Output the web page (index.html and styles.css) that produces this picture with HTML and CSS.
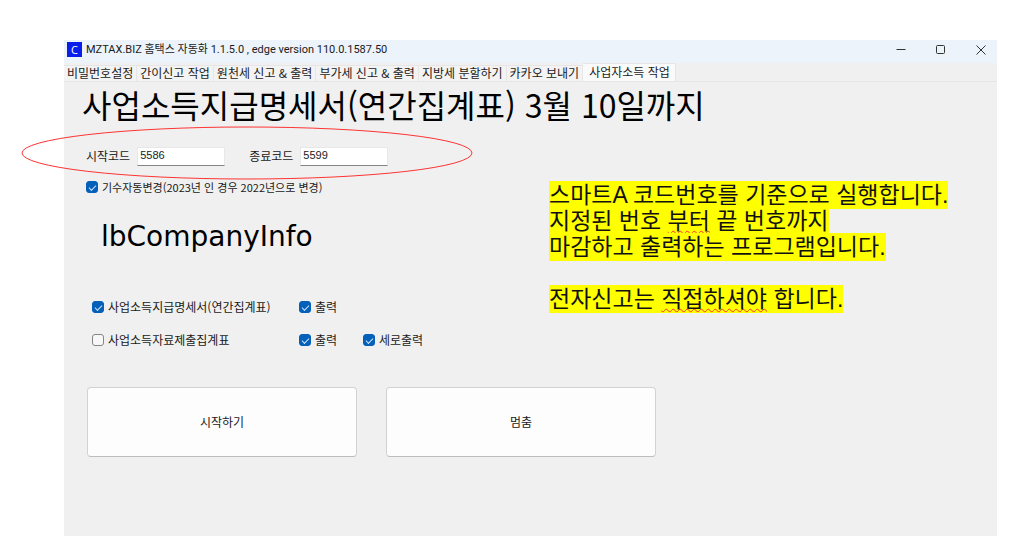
FILE: index.html
```html
<!DOCTYPE html>
<html lang="ko">
<head>
    <meta charset="UTF-8">
    <meta name="viewport" content="width=device-width, initial-scale=1.0">
    <title>MZTAX.BIZ 홈택스 자동화</title>
    <link rel="stylesheet" href="styles.css">
</head>
<body>
    <div class="window">
        <header class="titlebar">
            <span class="app-icon">C</span>
            <span class="app-title">MZTAX.BIZ 홈택스 자동화 1.1.5.0 , edge version 110.0.1587.50</span>
            <div class="window-controls">
                <button type="button" aria-label="최소화">
                    <svg viewBox="0 0 12 12"><path d="M1.5 5.5h9"/></svg>
                </button>
                <button type="button" aria-label="최대화">
                    <svg viewBox="0 0 12 12"><rect x="1.5" y="1.5" width="8" height="8" rx="1"/></svg>
                </button>
                <button type="button" aria-label="닫기">
                    <svg viewBox="0 0 12 12"><path d="M1.5 1.5l9 9M10.5 1.5l-9 9"/></svg>
                </button>
            </div>
        </header>

        <nav class="tabs">
            <button type="button">비밀번호설정</button>
            <button type="button">간이신고 작업</button>
            <button type="button">원천세 신고 &amp; 출력</button>
            <button type="button">부가세 신고 &amp; 출력</button>
            <button type="button">지방세 분할하기</button>
            <button type="button">카카오 보내기</button>
            <button type="button" class="active">사업자소득 작업</button>
        </nav>

        <main class="page">
            <h1>사업소득지급명세서(연간집계표) 3월 10일까지</h1>

            <div class="columns">
                <div class="form">
                    <div class="codes">
                        <label for="start-code">시작코드</label>
                        <input type="text" id="start-code" value="5586">
                        <label for="end-code" class="end-label">종료코드</label>
                        <input type="text" id="end-code" value="5599">
                        <svg class="circle-mark" viewBox="0 0 452 54"><ellipse cx="226" cy="27" rx="225" ry="26"/></svg>
                    </div>
                    <label class="check small"><input type="checkbox" checked>기수자동변경(2023년 인 경우 2022년으로 변경)</label>

                    <h2>lbCompanyInfo</h2>

                    <div class="options">
                        <label class="check"><input type="checkbox" checked>사업소득지급명세서(연간집계표)</label>
                        <label class="check"><input type="checkbox" checked>출력</label>
                        <span></span>
                        <label class="check"><input type="checkbox">사업소득자료제출집계표</label>
                        <label class="check"><input type="checkbox" checked>출력</label>
                        <label class="check"><input type="checkbox" checked>세로출력</label>
                    </div>
                </div>

                <p class="note">
                    <mark>스마트A 코드번호를 기준으로 실행합니다.</mark><br>
                    <mark>지정된 번호 <span class="typo">부터</span> 끝 번호까지</mark><br>
                    <mark>마감하고 출력하는 프로그램입니다.</mark><br>
                    <br>
                    <mark>전자신고는 <span class="typo">직접하셔야</span> 합니다.</mark>
                </p>
            </div>

            <div class="actions">
                <button type="button">시작하기</button>
                <button type="button">멈춤</button>
            </div>
        </main>
    </div>
</body>
</html>
```
FILE: styles.css
```css
:root {
    --face: #f0f0f0;
    --blue: #0560b9;
    --text: #1a1a1a;
}

* {
    box-sizing: border-box;
}

body {
    display: flex;
    flex-direction: column;
    min-height: 100vh;
    margin: 0;
    padding: 40px 27px 20px 64px;
    background: #fff;
    color: var(--text);
    font-family: 'Noto Sans CJK KR', sans-serif;
    font-size: 12px;
    line-height: 20px;
}

button, input {
    font: inherit;
    color: inherit;
}

.window {
    flex: 1;
    background: var(--face);
}

/* title bar */
.titlebar {
    display: flex;
    align-items: center;
    height: 23px;
    padding: 0 10px 4px 3px;
    background: #edf3fa;
}

.app-icon {
    width: 15px;
    height: 15px;
    margin-right: 4px;
    background: #0a1eea;
    color: #fff;
    font: 11px/15px 'Open Sans', sans-serif;
    text-align: center;
}

.app-title {
    font-family: Roboto, 'Noto Sans CJK KR', sans-serif;
    font-size: 11px;
}

.window-controls {
    display: flex;
    gap: 28px;
    margin-left: auto;
}

.window-controls button {
    width: 12px;
    height: 12px;
    padding: 0;
    border: none;
    background: none;
}

.window-controls svg {
    display: block;
    fill: none;
    stroke: #333;
}

/* tabs */
.tabs {
    display: flex;
    align-items: flex-end;
    height: 19px;
    border-bottom: 1px solid #e6e6e6;
}

.tabs button {
    height: 16px;
    padding: 0 4px 0 3px;
    border: none;
    background: #f3f3f3;
    box-shadow: inset -1px 1px #e6e6e6;
    line-height: 16px;
    white-space: nowrap;
}

.tabs .active {
    height: 18px;
    padding: 0 6px;
    background: #fafafa;
}

/* page */
.page {
    padding: 0 18px;
}

h1 {
    margin: 0;
    color: #000;
    font-size: 32px;
    font-weight: 400;
    line-height: 44px;
}

.columns {
    display: flex;
    align-items: flex-start;
}

.form {
    flex: 0 0 467px;
    padding: 20px 0 0 4px;
}

.codes {
    position: relative;
    display: flex;
    align-items: center;
    margin-bottom: 11px;
}

.codes input {
    width: 88px;
    height: 19px;
    margin-left: 7px;
    padding: 0 2px 2px;
    border: 1px solid #e8e8e8;
    border-bottom: 1px solid #858585;
    background: #fff;
    font-family: 'Liberation Sans', sans-serif;
    font-size: 11px;
}

.end-label {
    margin-left: 24px;
}

.circle-mark {
    position: absolute;
    left: -65px;
    top: -20px;
    width: 452px;
    height: 54px;
    fill: none;
    stroke: #f33;
    pointer-events: none;
}

.check {
    display: flex;
    align-items: center;
    gap: 4px;
    white-space: nowrap;
}

.check.small {
    font-size: 11px;
}

.check input {
    appearance: none;
    width: 12px;
    height: 12px;
    margin: 0;
    border: 1px solid #858585;
    border-radius: 3px;
    background: #f7f7f7;
}

.check input:checked {
    display: grid;
    place-items: center;
    border-color: var(--blue);
    background: var(--blue);
}

.check input:checked::before {
    content: '';
    width: 6px;
    height: 3px;
    border: solid #cfe2f5;
    border-width: 0 0 1px 1px;
    transform: rotate(-45deg);
}

h2 {
    margin: 20px 0 40px 15px;
    color: #000;
    font-family: 'DejaVu Sans', sans-serif;
    font-size: 28px;
    font-weight: 400;
    line-height: 40px;
}

.options {
    display: grid;
    grid-template-columns: 207px 64px auto;
    row-gap: 13px;
    padding-left: 6px;
}

/* highlighted note */
.note {
    margin: 56px 0 0;
    color: #111;
    font-family: 'Liberation Sans', 'Noto Sans CJK KR', sans-serif;
    font-size: 23px;
    line-height: 26px;
    white-space: nowrap;
}

.note mark {
    padding: 1px 0;
    background: #ff0;
    color: inherit;
}

.typo {
    text-decoration: underline wavy #f33 1px;
}

.actions {
    display: flex;
    gap: 29px;
    margin-top: 37px;
    padding-left: 5px;
}

.actions button {
    width: 270px;
    height: 70px;
    border: 1px solid #d2d2d2;
    border-bottom-color: #bdbdbd;
    border-radius: 4px;
    background: #fdfdfd;
}
```
